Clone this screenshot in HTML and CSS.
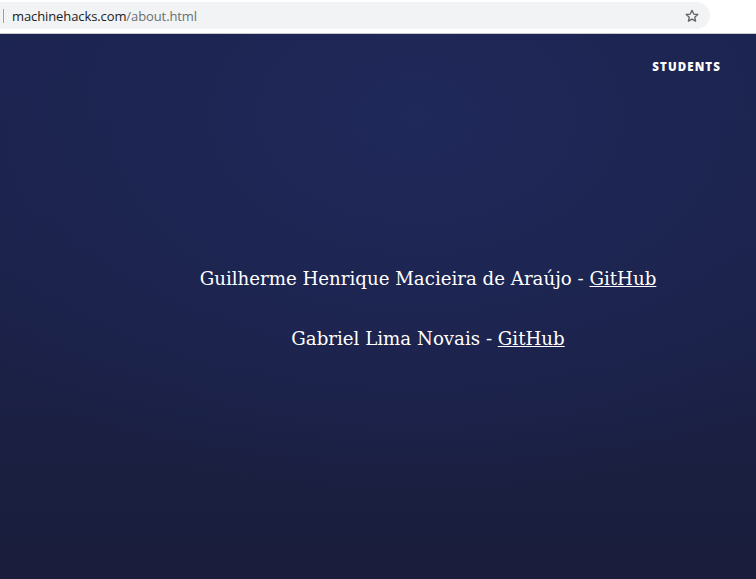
FILE: index.html
```html
<!DOCTYPE html>
<html>
<head>
<meta charset="utf-8">
<link rel="stylesheet" href="styles.css">
</head>
<body>
<div class="chrome">
  <div class="omnibox">
    <span class="caret"></span>
    <span class="url"><span class="host">machinehacks.com</span><span class="path">/about.html</span></span>
    <svg class="star" width="16" height="16" viewBox="0 0 24 24"><path d="M12 3.5l2.6 5.6 6.1.6-4.6 4.1 1.3 6-5.4-3.1-5.4 3.1 1.3-6-4.6-4.1 6.1-.6z" fill="none" stroke="#5f6368" stroke-width="2" stroke-linejoin="round"/></svg>
  </div>
</div>
<main class="page">
  <nav class="nav"><a class="nav-link">STUDENTS</a></nav>
  <section class="students">
    <p class="student">Guilherme Henrique Macieira de Araújo - <a class="gh">GitHub</a></p>
    <p class="student">Gabriel Lima Novais - <a class="gh">GitHub</a></p>
  </section>
</main>
</body>
</html>
```
FILE: styles.css
```css
html, body { margin: 0; padding: 0; }
body { width: 756px; height: 579px; overflow: hidden; background: #fff; }
.chrome {
  height: 31px;
  border-bottom: 1px solid #c7c9cc;
  background: #fff;
  padding-top: 2px;
  box-sizing: content-box;
}
.omnibox {
  height: 27px;
  width: 710px;
  background: #f1f3f4;
  border-radius: 0 14px 14px 0;
  display: flex;
  align-items: center;
  font-family: "Open Sans", sans-serif;
  font-size: 13px;
}
.caret { width: 1px; height: 14px; background: #9aa0a6; margin-left: 3px; }
.url { margin-left: 8px; flex: 1; letter-spacing: -0.1px; }
.host { color: #202124; }
.path { color: #6b6f74; }
.star { margin-right: 10px; }
.page {
  height: 545px;
  background:
    radial-gradient(ellipse 75% 70% at 55% 15%, #1f295a 0%, #1d2552 45%, rgba(29,36,78,0) 100%),
    linear-gradient(180deg, #1c2350 0%, #1b2146 60%, #1a1d3b 100%);
  display: flex;
  flex-direction: column;
}
.nav { display: flex; justify-content: flex-end; padding: 25px 35px 0 0; }
.nav-link {
  color: #fff;
  font-family: "Open Sans", sans-serif;
  font-weight: 800;
  font-size: 11.5px;
  letter-spacing: 1.1px;
}
.students {
  padding-left: 100px;
  margin-top: 193px;
  text-align: center;
  color: #fff;
  font-family: "DejaVu Serif", serif;
  font-size: 18.2px;
}
.student { margin: 0 0 36px; line-height: 24px; }
.gh { color: #fff; text-decoration: underline; }
```
